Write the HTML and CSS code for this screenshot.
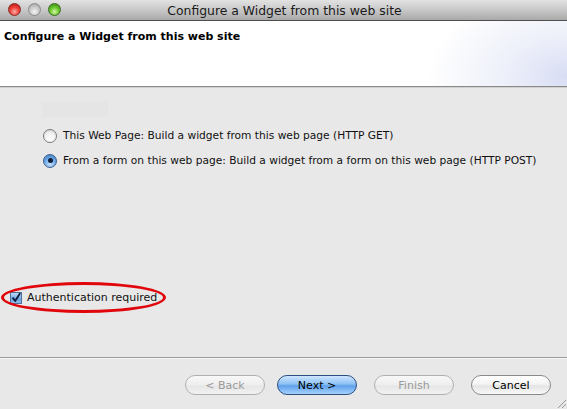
FILE: index.html
```
<!DOCTYPE html>
<html>
<head>
<meta charset="utf-8">
<link rel="stylesheet" href="styles.css">
</head>
<body>
<div class="window">
  <div class="titlebar">
    <div class="lights">
      <span class="light red"></span>
      <span class="light gray"></span>
      <span class="light green"></span>
    </div>
    <div class="wtitle">Configure a Widget from this web site</div>
  </div>
  <div class="banner">
    <div class="banner-title">Configure a Widget from this web site</div>
  </div>
  <div class="content">
    <div class="faint"></div>
    <div class="options">
      <label class="opt"><span class="radio"></span><span>This Web Page: Build a widget from this web page (HTTP GET)</span></label>
      <label class="opt"><span class="radio on"><span class="dot"></span></span><span>From a form on this web page: Build a widget from a form on this web page (HTTP POST)</span></label>
    </div>
    <div class="auth">
      <span class="check"><svg width="12" height="12" viewBox="0 0 12 12"><path d="M2.5 6.2 L5 9.5 L10.5 1" fill="none" stroke="#0d1b3a" stroke-width="2.2" stroke-linecap="round" stroke-linejoin="round"/></svg></span>
      <span>Authentication required</span>
      <span class="ring"></span>
    </div>
  </div>
  <div class="footer">
    <button class="btn disabled">&lt; Back</button>
    <button class="btn default gap-l">Next &gt;</button>
    <button class="btn disabled gap-l">Finish</button>
    <button class="btn gap-l">Cancel</button>
    <svg class="grip" width="10" height="10" viewBox="0 0 10 10"><path d="M2 10 L10 2 M6 10 L10 6" stroke="#999" stroke-width="1"/></svg>
  </div>
</div>
</body>
</html>
```
FILE: styles.css
```
html, body {
  margin: 0;
  padding: 0;
}
body {
  width: 567px;
  height: 409px;
  overflow: hidden;
  font-family: "DejaVu Sans", "Liberation Sans", sans-serif;
  background: #e8e8e8;
}
.window {
  display: flex;
  flex-direction: column;
  height: 409px;
}
.titlebar {
  height: 20px;
  flex: none;
  position: relative;
  display: flex;
  align-items: center;
  justify-content: center;
  background: linear-gradient(#e2e2e2, #c8c8c8 50%, #a9a9a9);
  border-bottom: 1px solid #4e4e4e;
}
.lights {
  position: absolute;
  left: 8px;
  top: 3px;
  display: flex;
  gap: 7px;
}
.light {
  width: 13px;
  height: 13px;
  border-radius: 50%;
  box-sizing: border-box;
}
.light.red {
  background: radial-gradient(circle at 50% 70%, #ffb0a8 0%, #f0423a 45%, #a8110e 100%);
  border: 1px solid #8a2a25;
}
.light.gray {
  background: radial-gradient(circle at 50% 70%, #f4f4f4 0%, #c8c8c8 50%, #9a9a9a 100%);
  border: 1px solid #8c8c8c;
}
.light.green {
  background: radial-gradient(circle at 50% 70%, #d6f7a8 0%, #6bc92e 45%, #2f7b10 100%);
  border: 1px solid #3d6d22;
}
.wtitle {
  font-size: 12.4px;
  color: #1a1a1a;
  padding-left: 2px;
}
.banner {
  height: 66px;
  flex: none;
  box-sizing: border-box;
  background:
    radial-gradient(ellipse 140px 90px at 100% 85%, #d8ddf4 0%, rgba(226,230,246,0.6) 45%, rgba(255,255,255,0) 100%),
    #ffffff;
  border-bottom: 1px solid #8a8a8a;
  box-shadow: 0 1px 0 #d0d0d0;
  padding: 9px 0 0 4px;
}
.banner-title {
  font-weight: bold;
  font-size: 11px;
  color: #000;
}
.content {
  flex: 1;
  position: relative;
  border-bottom: 1px solid #9a9a9a;
  box-shadow: 0 1px 0 #f6f6f6;
  padding: 15px 0 0 0;
}
.faint {
  margin-left: 42px;
  width: 66px;
  height: 15px;
  background: #e5e5e5;
}
.options {
  margin: 11px 0 0 43px;
  display: flex;
  flex-direction: column;
  gap: 10px;
}
.opt {
  display: flex;
  align-items: center;
  gap: 6px;
  font-size: 10.65px;
  color: #111;
  height: 15px;
}
.radio {
  width: 14px;
  height: 14px;
  border-radius: 50%;
  box-sizing: border-box;
  border: 1px solid #7a7a7a;
  background: radial-gradient(circle at 50% 75%, #ffffff 0%, #f2f2f2 50%, #cfcfcf 100%);
  display: flex;
  align-items: center;
  justify-content: center;
  flex: none;
}
.radio.on {
  border-color: #3b5e8c;
  background: radial-gradient(circle at 50% 75%, #c6e2ff 0%, #6fa9e6 50%, #3c78c0 100%);
}
.dot {
  width: 5px;
  height: 5px;
  border-radius: 50%;
  background: #0e1e3a;
}
.auth {
  position: relative;
  margin: 123px 0 0 10px;
  display: flex;
  align-items: center;
  gap: 5px;
  font-size: 11px;
  color: #111;
  height: 13px;
}
.check {
  width: 12px;
  height: 12px;
  box-sizing: border-box;
  border: 1px solid #4f6f99;
  background: linear-gradient(#bfdcff, #6aa4e0 60%, #8cbcf0);
  display: flex;
  align-items: center;
  justify-content: center;
  flex: none;
}
.ring {
  position: absolute;
  left: -9px;
  top: -9px;
  width: 159px;
  height: 25px;
  border: 3px solid #e0060b;
  border-radius: 50%;
}
.footer {
  height: 51px;
  flex: none;
  position: relative;
  display: flex;
  align-items: center;
  justify-content: flex-end;
  padding-right: 16px;
  padding-top: 3px;
  box-sizing: border-box;
}
.btn {
  width: 80px;
  height: 20px;
  border-radius: 10px;
  border: 1px solid #8a8a8a;
  background: linear-gradient(#ffffff, #f4f4f4 45%, #e4e4e4 55%, #f8f8f8);
  font-family: "DejaVu Sans", "Liberation Sans", sans-serif;
  font-size: 11px;
  color: #000;
  padding: 0;
}
.btn.gap-l {
  margin-left: 17px;
}
.btn.default.gap-l {
  margin-left: 12px;
}
.btn.disabled {
  color: #9a9a9a;
  border-color: #b0b0b0;
  background: linear-gradient(#f8f8f8, #eeeeee 50%, #e6e6e6 55%, #f2f2f2);
}
.btn.default {
  border-color: #2d4f80;
  background: linear-gradient(#cfe6ff, #8cc0f4 45%, #5fa0ea 55%, #a6d2ff);
}
.grip {
  position: absolute;
  right: 1px;
  bottom: 1px;
}
```
